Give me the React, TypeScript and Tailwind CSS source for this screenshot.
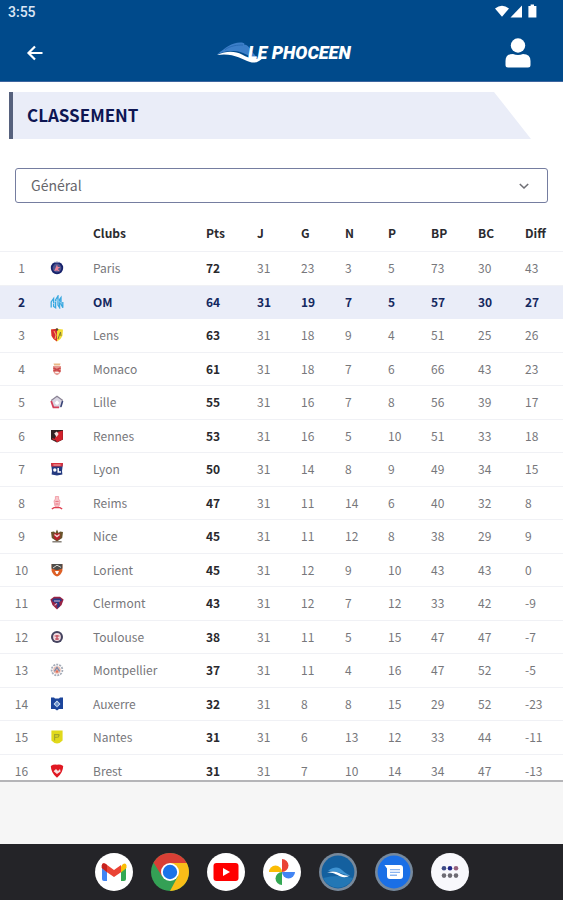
import React from "react";

type Team = {
  club: string;
  points: number;
  stats: number[];
  crest: React.ReactNode;
};

const shield = "M1 1.5 L7 0.8 L13 1.5 L12.4 8 Q11 11.5 7 13.5 Q3 11.5 1.6 8 Z";

const teams: Team[] = [
  {
    club: "Paris",
    points: 72,
    stats: [31, 23, 3, 5, 73, 30, 43],
    crest: (
      <>
        <circle cx="7" cy="7" r="6.2" fill="#16216b" />
        <circle cx="7" cy="7" r="4.4" fill="#4c558f" />
        <path d="M4.2 10 L7 3.5 L7.8 6 H10.4 L7.8 8 L10 10.6 L7 9.4 Z" fill="#ee8398" />
        <path d="M4 1.4 H10" stroke="#8a93bd" strokeWidth="1" />
      </>
    ),
  },
  {
    club: "OM",
    points: 64,
    stats: [31, 19, 7, 5, 57, 30, 27],
    crest: (
      <>
        <path
          d="M1.2 12.5 V7 L3.6 3.5 V11.5 L5.6 12.8 V5 L8 1 V10 L9.6 12.6 V4.5 L11 2.6 V9 L12.8 12.8 V7"
          fill="none"
          stroke="#38a8e0"
          strokeWidth="1.3"
        />
        <path d="M3 9 L7 5 L11 8" stroke="#8bcdf0" fill="none" />
      </>
    ),
  },
  {
    club: "Lens",
    points: 63,
    stats: [31, 18, 9, 4, 51, 25, 26],
    crest: (
      <>
        <path d={shield} fill="#f3dc33" />
        <path d="M1 1.5 L7 0.8 V13.5 Q3 11.5 1.6 8 Z" fill="#d92b35" />
        <path d="M4 3 L6 7 L5 11" stroke="#f4c25b" fill="none" />
        <path d="M8 11 L10.5 4 L11 8" stroke="#7c7b36" fill="none" />
        <circle cx="7" cy="1.5" r="1.2" fill="#55452f" />
      </>
    ),
  },
  {
    club: "Monaco",
    points: 61,
    stats: [31, 18, 7, 6, 66, 43, 23],
    crest: (
      <>
        <path d="M3.5 1.4 H10.5 L9.8 3.4 H4.2 Z" fill="#e9b886" />
        <path d="M3 4 H11 V9 Q10 12 7 13.2 Q4 12 3 9 Z" fill="#e69a91" />
        <path d="M3.5 6 L10.5 9.5 M3.5 9 L10.5 6" stroke="#c9474a" strokeWidth="1.6" />
        <path d="M5.2 10.6 H8.8" stroke="#fff" />
      </>
    ),
  },
  {
    club: "Lille",
    points: 55,
    stats: [31, 16, 7, 8, 56, 39, 17],
    crest: (
      <>
        <path d="M7 1 L13 5.4 L10.8 12.8 H3.2 L1 5.4 Z" fill="#d9d5e2" />
        <path d="M1.2 5.6 L7 1.2 L12.8 5.6" fill="none" stroke="#8a8394" strokeWidth="1.2" />
        <path d="M1.2 6 L3.4 12.4 H9" fill="none" stroke="#d4415b" strokeWidth="1.8" />
        <path d="M12.6 6 L10.8 12" stroke="#3a4577" strokeWidth="1.6" />
        <path d="M4.5 8 L7 5.2 L9.5 8 L7 10 Z" fill="#fff" />
      </>
    ),
  },
  {
    club: "Rennes",
    points: 53,
    stats: [31, 16, 5, 10, 51, 33, 18],
    crest: (
      <>
        <path d="M1 1 H13 V10.5 L7 13.5 L1 10.5 Z" fill="#302223" />
        <path d="M7.5 3 L12.8 1.6 V10.4 L7 13.3 L4.6 10 Z" fill="#d3212b" />
        <path d="M4.2 4.5 L6.8 2.6 L8.6 5 L6.6 8 Z" fill="#f4dfdc" />
        <path d="M2.4 9.5 L5 11" stroke="#d3212b" strokeWidth="1.4" />
      </>
    ),
  },
  {
    club: "Lyon",
    points: 50,
    stats: [31, 14, 8, 9, 49, 34, 15],
    crest: (
      <>
        <path d="M1 1 H13 L12 9 L12.4 12.6 L7 13.4 L1.6 12.6 L2 9 Z" fill="#243a80" />
        <path d="M1 1 H13 L12.6 4.6 H1.4 Z" fill="#d8313d" />
        <path d="M3.4 3 H10.6" stroke="#efb5b7" />
        <circle cx="4.8" cy="8" r="1.7" fill="#fff" />
        <path d="M8.2 6 V10 H11" stroke="#fff" strokeWidth="1.5" fill="none" />
      </>
    ),
  },
  {
    club: "Reims",
    points: 47,
    stats: [31, 11, 14, 6, 40, 32, 8],
    crest: (
      <>
        <path d="M5.4 0.5 H8.6 V3 L10 5 L9 10.4 H5 L4 5 L5.4 3 Z" fill="#f8c6cb" stroke="#ee8b96" strokeWidth="0.7" />
        <path d="M5.4 5.4 H8.6 M5.4 8 H8.6" stroke="#e8707e" />
        <path d="M1.8 13 L4 11.6 H10 L12.2 13" stroke="#df3f50" strokeWidth="1.4" fill="none" />
      </>
    ),
  },
  {
    club: "Nice",
    points: 45,
    stats: [31, 11, 12, 8, 38, 29, 9],
    crest: (
      <>
        <path d="M1 3 L4 2.4 L5.4 4 L7 0.6 L8.6 4 L10 2.4 L13 3 L12.2 9 L7 12.6 L1.8 9 Z" fill="#69552c" />
        <path d="M3.8 4.4 H10.2 V9 L7 11.6 L3.8 9 Z" fill="#b72029" />
        <path d="M4.5 5.6 L7 7.6 L9.5 5.6" stroke="#f4d6d6" strokeWidth="1.3" fill="none" />
        <path d="M2.4 12.8 H11.6" stroke="#756e65" strokeWidth="1.3" />
      </>
    ),
  },
  {
    club: "Lorient",
    points: 45,
    stats: [31, 12, 9, 10, 43, 43, 0],
    crest: (
      <>
        <path d="M1.6 1 H12.4 V8 Q11 12 7 13.6 Q3 12 1.6 8 Z" fill="#dd6026" />
        <path d="M1.6 1 H12.4 V5.5 L7 7.2 L1.6 5.5 Z" fill="#4f4d4a" />
        <path d="M3 5 L7 2.2 L11 4.4" stroke="#d9d8d3" fill="none" />
        <path d="M5 8 H9 L7.6 11 H6.4 Z" fill="#fff" />
      </>
    ),
  },
  {
    club: "Clermont",
    points: 43,
    stats: [31, 12, 7, 12, 33, 42, -9],
    crest: (
      <>
        <path d="M0.4 3.6 L4 0.8 H10 L13.6 3.6 L11.6 9 L7 13.6 L2.4 9 Z" fill="#982345" />
        <path d="M3.4 2.4 H10.6 L12 4.6 L9 6 L10 10 L7 12.4 L7.4 8 L2 5 Z" fill="#263a87" />
        <path d="M4 5 H10 M4.6 9.4 L7 7.4" stroke="#d7bfd9" strokeWidth="1.1" />
      </>
    ),
  },
  {
    club: "Toulouse",
    points: 38,
    stats: [31, 11, 5, 15, 47, 47, -7],
    crest: (
      <>
        <circle cx="7" cy="7" r="6" fill="#45435f" />
        <circle cx="7" cy="7" r="3.9" fill="#f2dce0" />
        <path d="M4.6 6 H9.4 M7 5 V10 M5 9 H9" stroke="#be4152" strokeWidth="1.2" />
      </>
    ),
  },
  {
    club: "Montpellier",
    points: 37,
    stats: [31, 11, 4, 16, 47, 52, -5],
    crest: (
      <>
        <circle cx="7" cy="7" r="5.4" fill="none" stroke="#a6adb9" strokeWidth="1.8" strokeDasharray="2 1" />
        <circle cx="7" cy="7" r="3.8" fill="#e9bdb2" />
        <path d="M4.4 8.4 L7 4.4 L9.6 8.4" stroke="#788bad" strokeWidth="1.2" fill="none" />
        <circle cx="7" cy="8.5" r="1.2" fill="#e0705a" />
      </>
    ),
  },
  {
    club: "Auxerre",
    points: 32,
    stats: [31, 8, 8, 15, 29, 52, -23],
    crest: (
      <>
        <path d="M1 0.6 H4 L5 1.6 H9 L10 0.6 H13 V12 H9 L7 13.6 L5 12 H1 Z" fill="#1c459b" />
        <path d="M7 3.4 L10.4 7 L7 10.6 L3.6 7 Z" fill="#dbe8f6" />
        <path d="M5 7 H9 M7 5 V9.4" stroke="#4775bb" strokeWidth="1.1" />
      </>
    ),
  },
  {
    club: "Nantes",
    points: 31,
    stats: [31, 6, 13, 12, 33, 44, -11],
    crest: (
      <>
        <path d="M1.4 0.6 H12.6 V10.5 Q10.4 13 7 13.6 Q3.6 13 1.4 10.5 Z" fill="#e1d91b" />
        <path d="M4.6 10.6 V4.6 H9 M5 7.4 L8.2 7 L9.4 4.4" stroke="#a3a62a" strokeWidth="1.1" fill="none" />
      </>
    ),
  },
  {
    club: "Brest",
    points: 31,
    stats: [31, 7, 10, 14, 34, 47, -13],
    crest: (
      <>
        <path d="M0.8 2 Q4 0 7 0.8 Q10 0 13.2 2 Q13 9 7 13.8 Q1 9 0.8 2 Z" fill="#e01822" />
        <path d="M3.6 7.2 L6 5 L8 7 L10 5 L10.6 7.6 L7 10 Z" fill="#f9dddd" />
      </>
    ),
  },
];

const headings = ["Pts", "J", "G", "N", "P", "BP", "BC", "Diff"];

function StatusBar() {
  return (
    <div className="flex h-6 items-center justify-between pl-2 pr-6">
      <span className="font-[Roboto,sans-serif] text-sm leading-6 font-medium text-[#dbe6f5]">3:55</span>
      <svg className="h-4 w-11" viewBox="0 0 44 16" fill="#fff" aria-hidden="true">
        <path d="M0 4.6 Q7 -1 14 4.6 L7 12.8 Z" />
        <path d="M27 1.6 V13.4 H15.5 Z" />
        <path d="M35.6 0.4 H39 V2 H41.4 V13.4 H33.4 V2 H35.6 Z" />
      </svg>
    </div>
  );
}

function Logo() {
  return (
    <svg className="h-6 w-[136px]" viewBox="0 0 136 24" role="img" aria-label="Le Phoceen">
      <path d="M0 13.5 C8 7 15 1.5 23 1.5 C27 1.5 28 2.5 27 3.4 C31 4 33 7 35 10.5 C37 13.5 39 15.5 42 17 C33 18 27 9.5 16 10 C9 10 5 11.5 0 13.5 Z" fill="#3c7fc9" />
      <path d="M8 8.6 C14 4.6 20 4 26 4" stroke="#2466b0" strokeWidth="0.8" fill="none" />
      <path d="M0 14 C10 9.6 18 10.2 25 13.6 C32 17.6 38 19.4 46 16 C43 21 38 22.5 33 21 C24 18 16 11.5 0 14 Z" fill="#fff" />
      <text x="31" y="18" fill="#fff" fontFamily="Roboto, sans-serif" fontSize="18" fontWeight="900" fontStyle="italic">
        LE PHOCEEN
      </text>
    </svg>
  );
}

const dock: { name: string; art: React.ReactNode }[] = [
  {
    name: "Gmail",
    art: (
      <>
        <circle cx="19" cy="19" r="19" fill="#fff" />
        <path d="M7 12 V26 Q7 28 9 28 H12 V15 Z" fill="#4285f4" />
        <path d="M31 12 V26 Q31 28 29 28 H26 V15 Z" fill="#34a853" />
        <path d="M26 13.5 L28 11 Q31 9.5 31.5 12.5 V15 L26 19.4 Z" fill="#fbbc04" />
        <path d="M6.8 15 V12.5 Q7.4 9.4 10.4 10.8 L19 17 L26 12 V19.2 L19 24 L12 19.2 Z" fill="#ea4335" />
        <path d="M6.8 15 V12.5 Q7.4 9.4 10.4 10.8 L12 12 V19 Z" fill="#c5221f" />
      </>
    ),
  },
  {
    name: "Chrome",
    art: (
      <>
        <circle cx="19" cy="19" r="19" fill="#34a055" />
        <path d="M19 10 H35.7 A19 19 0 0 0 2.5 9.5 L11.2 23.5 Z" fill="#d93f35" />
        <path d="M19 10 H35.7 A19 19 0 0 1 19 38 L26.8 23.5 Z" fill="#f9bd18" />
        <circle cx="19" cy="19" r="9" fill="#fff" />
        <circle cx="19" cy="19" r="7.2" fill="#1a73e8" />
      </>
    ),
  },
  {
    name: "YouTube",
    art: (
      <>
        <circle cx="19" cy="19" r="19" fill="#fff" />
        <rect x="6.5" y="10" width="25" height="18" rx="3" fill="#f00" />
        <path d="M16 15 L23 19 L16 23 Z" fill="#fff" />
      </>
    ),
  },
  {
    name: "Photos",
    art: (
      <>
        <circle cx="19" cy="19" r="19" fill="#fff" />
        <path d="M19 6 A6.5 6.5 0 0 1 19 19 Z" fill="#ea4335" />
        <path d="M32 19 A6.5 6.5 0 0 1 19 19 Z" fill="#4285f4" />
        <path d="M19 32 A6.5 6.5 0 0 1 19 19 Z" fill="#34a853" />
        <path d="M6 19 A6.5 6.5 0 0 1 19 19 Z" fill="#fbbc04" />
      </>
    ),
  },
  {
    name: "Le Phoceen",
    art: (
      <>
        <circle cx="19" cy="19" r="19" fill="#78899b" />
        <circle cx="19" cy="19" r="16.4" fill="#14609f" />
        <path d="M4 25 Q19 21 34 25 A16.4 16.4 0 0 1 4 25 Z" fill="#2377b5" />
        <path d="M9 18 C14 14 18 14 21 15.6 C24 18 27 21 30 22 C23 22 19 17.4 9 18 Z" fill="#3f94d3" />
        <path d="M8 19.4 C14 17.6 18 18.4 22 21 Q26 23.2 31 22.6 Q26 25.6 21 23.2 C17 21 14 19.4 8 19.4 Z" fill="#fff" />
      </>
    ),
  },
  {
    name: "Messages",
    art: (
      <>
        <circle cx="19" cy="19" r="19" fill="#76899d" />
        <circle cx="19" cy="19" r="16.4" fill="#1a6fe6" />
        <path d="M9.5 12 H25 Q28 12 28 15 V23 Q28 26 25 26 H15 Q12 26 12 23 V15.5 Z" fill="#fff" />
        <path d="M15 16.6 H25 M15 19.4 H25 M15 22.2 H22" stroke="#8bb5f1" strokeWidth="1.4" />
      </>
    ),
  },
  {
    name: "Applications",
    art: (
      <>
        <circle cx="19" cy="19" r="19" fill="#f8f8fc" />
        <circle cx="13" cy="15.2" r="2.3" fill="#3c4a86" />
        <circle cx="19" cy="15.2" r="2.3" fill="#1c2488" />
        <circle cx="25" cy="15.2" r="2.3" fill="#95607c" />
        <circle cx="13" cy="22.6" r="2.3" fill="#6d6b73" />
        <circle cx="19" cy="22.6" r="2.3" fill="#6d6b73" />
        <circle cx="25" cy="22.6" r="2.3" fill="#6d6b73" />
      </>
    ),
  },
];

function StandingsTable() {
  return (
    <table className="w-full table-fixed border-collapse text-left text-xs leading-4">
      <colgroup>
        <col className="w-[43px]" />
        <col className="w-[50px]" />
        <col />
        <col className="w-[51px]" />
        <col className="w-[44px]" />
        <col className="w-[44px]" />
        <col className="w-[43px]" />
        <col className="w-[43px]" />
        <col className="w-[47px]" />
        <col className="w-[47px]" />
        <col className="w-[38px]" />
      </colgroup>
      <thead>
        <tr className="h-9 border-b border-[#f0f1f5] text-[#2b2b2f]">
          <td />
          <td />
          <th className="p-0 font-bold">Clubs</th>
          {headings.map((h) => (
            <th key={h} className="p-0 font-bold">{h}</th>
          ))}
        </tr>
      </thead>
      <tbody>
        {teams.map((t, i) => {
          const own = t.club === "OM";
          return (
            <tr
              key={t.club}
              className={
                own
                  ? "h-[33px] border-b border-[#eaedf8] bg-[#eaedf8] font-bold text-[#14285f]"
                  : "border-b border-[#f0f1f5] text-[#77777b] odd:h-[34px] even:h-[33px]"
              }
            >
              <td className="p-0 text-center">{i + 1}</td>
              <td className="p-0">
                <svg className="ml-[7px] block size-[14px]" viewBox="0 0 14 14" aria-hidden="true">
                  {t.crest}
                </svg>
              </td>
              <td className="p-0">{t.club}</td>
              <td className={own ? "p-0" : "p-0 font-bold text-[#29292d]"}>{t.points}</td>
              {t.stats.map((s, k) => (
                <td key={k} className="p-0">{s}</td>
              ))}
            </tr>
          );
        })}
      </tbody>
    </table>
  );
}

export default function App() {
  return (
    <div className="flex h-screen flex-col overflow-hidden bg-white font-['Noto_Sans_CJK_SC','Noto_Sans',sans-serif]">
      <header className="shrink-0 border-b border-[#3d659f] bg-[#004a8b]">
        <StatusBar />
        <div className="flex h-[57px] items-center justify-between pl-[26px] pr-8">
          <button type="button" aria-label="Retour" className="flex w-10 items-center">
            <svg className="h-[18px] w-[18px]" viewBox="0 0 18 18" fill="none" stroke="#fff" strokeWidth="2.2" aria-hidden="true">
              <path d="M16.5 9 H2.5 M9 2.5 L2.5 9 L9 15.5" />
            </svg>
          </button>
          <Logo />
          <button type="button" aria-label="Profil" className="flex w-7 justify-end">
            <svg className="h-[30px] w-[26px]" viewBox="0 0 26 30" fill="#fff" aria-hidden="true">
              <circle cx="13" cy="7.5" r="7.2" />
              <path d="M0.5 23 Q0.5 16 8 16 Q13 18 18 16 Q25.5 16 25.5 23 V27 Q25.5 29.5 23 29.5 H3 Q0.5 29.5 0.5 27 Z" />
            </svg>
          </button>
        </div>
      </header>

      <main className="min-h-0 flex-1 overflow-hidden border-b-2 border-[#b5b5b8]">
        <div className="mt-2.5 mr-8 ml-[9px] flex h-[47px] items-center border-l-4 border-[#56617d] bg-[#eaedf8] pb-0.5 pl-3.5 [clip-path:polygon(0_0,calc(100%_-_37px)_0,100%_100%,0_100%)]">
          <h1 className="text-[17px] leading-6 font-bold text-[#0e1653]">CLASSEMENT</h1>
        </div>

        <div className="relative mx-[15px] mt-[29px] mb-3">
          <select
            aria-label="Type de classement"
            className="block h-[35px] w-full appearance-none rounded-[3px] border border-[#757da0] bg-white pb-0.5 pl-[15px] text-sm text-[#66666b]"
          >
            <option>Général</option>
          </select>
          <svg
            className="pointer-events-none absolute top-3 right-[18px] h-3 w-3"
            viewBox="0 0 12 12"
            fill="none"
            stroke="#6f6f75"
            strokeWidth="1.6"
            aria-hidden="true"
          >
            <path d="M1.8 4 L6 8 L10.2 4" />
          </svg>
        </div>

        <StandingsTable />
      </main>

      <div className="h-[62px] shrink-0 bg-[#f6f6f6]" />

      <nav aria-label="Applications" className="flex h-14 shrink-0 items-center justify-center gap-[18px] bg-[#242428]">
        {dock.map((d) => (
          <button key={d.name} type="button" aria-label={d.name}>
            <svg className="block size-[38px]" viewBox="0 0 38 38" aria-hidden="true">{d.art}</svg>
          </button>
        ))}
      </nav>
    </div>
  );
}
